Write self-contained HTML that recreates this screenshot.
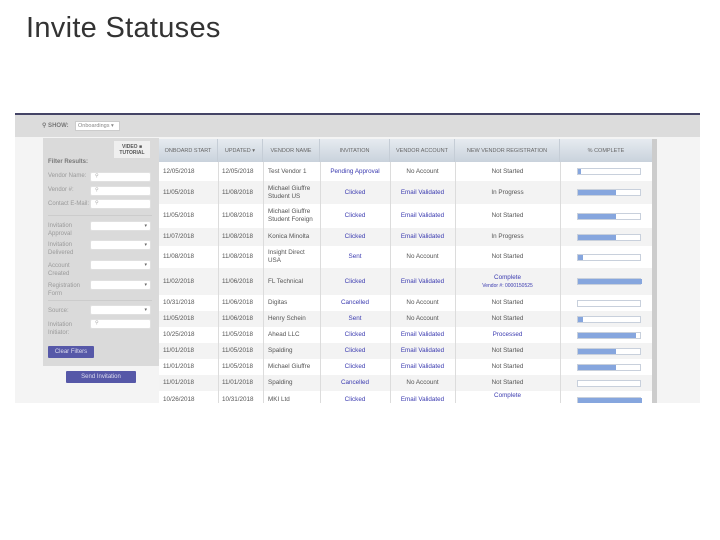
<!DOCTYPE html>
<html><head><meta charset="utf-8"><style>
*{margin:0;padding:0;box-sizing:border-box}
body{width:720px;height:540px;background:#fff;font-family:"Liberation Sans",sans-serif;position:relative;overflow:hidden}
.title{position:absolute;left:26px;top:12px;font-size:29px;color:#333;font-weight:normal;letter-spacing:0.3px}
.abs{position:absolute}
.lbl{position:absolute;font-size:6px;color:#9a9a9a;line-height:8px}
.inp{position:absolute;left:90px;width:61px;height:10px;background:#fff;border:1px solid #e0e0e0;border-radius:2px;font-size:5px;color:#aaa;padding-left:4px}
.sel::after{content:"▾";position:absolute;right:3px;top:1px;font-size:5px;color:#666}
.cell{position:absolute;font-size:6.3px;color:#555;display:flex;align-items:center;line-height:8px}
.c{justify-content:center;text-align:center}
.b{color:#3b3bb0}
.bar{position:absolute;left:577px;width:64px;height:7px;border:1px solid #c8d0dc;background:#fff}
.bar i{display:block;height:100%;background:#86a6de}
.hd{position:absolute;top:139px;height:23px;font-size:5.5px;color:#666;display:flex;align-items:center;justify-content:center;border-right:1px solid #c5cdd6}
</style></head><body>
<div class="title">Invite Statuses</div>
<div class="abs" style="left:15px;top:113px;width:685px;height:290px;background:#f4f4f4"></div>
<div class="abs" style="left:15px;top:113px;width:685px;height:2px;background:#444466"></div>
<div class="abs" style="left:15px;top:115px;width:685px;height:22px;background:#dcdcdc"></div>
<div class="abs" style="left:42px;top:122px;font-size:6px;color:#777;font-weight:bold">⚲ SHOW:</div>
<div class="abs" style="left:75px;top:121px;width:45px;height:10px;background:#fff;border:1px solid #ccc;font-size:5.5px;color:#888;padding:1px 2px">Onboardings ▾</div>
<div class="abs" style="left:43px;top:138px;width:116px;height:228px;background:#dadada"></div>
<div class="abs" style="left:114px;top:141px;width:36px;height:17px;background:#efefef;font-size:5px;color:#555;font-weight:bold;text-align:center;line-height:6px;padding-top:3px">VIDEO ■<br>TUTORIAL</div>
<div class="lbl" style="left:48px;top:158px;color:#777;font-weight:bold">Filter Results:</div>
<div class="lbl" style="left:48px;top:172px">Vendor Name:</div><div class="inp" style="top:172px">⚲</div>
<div class="lbl" style="left:48px;top:186px">Vendor #:</div><div class="inp" style="top:186px">⚲</div>
<div class="lbl" style="left:48px;top:200px">Contact E-Mail:</div><div class="inp" style="top:199px">⚲</div>
<div class="abs" style="left:48px;top:215px;width:104px;height:1px;background:#ccc"></div>
<div class="lbl" style="left:48px;top:222px">Invitation<br>Approval</div><div class="inp sel" style="top:221px"></div>
<div class="lbl" style="left:48px;top:241px">Invitation<br>Delivered</div><div class="inp sel" style="top:240px"></div>
<div class="lbl" style="left:48px;top:262px">Account<br>Created</div><div class="inp sel" style="top:260px"></div>
<div class="lbl" style="left:48px;top:282px">Registration<br>Form</div><div class="inp sel" style="top:280px"></div>
<div class="abs" style="left:48px;top:300px;width:104px;height:1px;background:#ccc"></div>
<div class="lbl" style="left:48px;top:307px">Source:</div><div class="inp sel" style="top:305px"></div>
<div class="lbl" style="left:48px;top:321px">Invitation<br>Initiator:</div><div class="inp" style="top:319px">⚲</div>
<div class="abs" style="left:48px;top:346px;width:46px;height:12px;background:#5658a8;color:#dde;font-size:6px;text-align:center;line-height:12px;border-radius:1px">Clear Filters</div>
<div class="abs" style="left:66px;top:371px;width:70px;height:12px;background:#5658a8;color:#dde;font-size:6px;text-align:center;line-height:12px;border-radius:1px">Send Invitation</div>
<div class="abs" style="left:159px;top:139px;width:493px;height:23px;background:linear-gradient(#e6ebf0,#c9d2dc)"></div>
<div class="hd" style="left:159px;width:59px">ONBOARD START</div>
<div class="hd" style="left:218px;width:45px">UPDATED ▾</div>
<div class="hd" style="left:263px;width:57px">VENDOR NAME</div>
<div class="hd" style="left:320px;width:70px">INVITATION</div>
<div class="hd" style="left:390px;width:65px">VENDOR ACCOUNT</div>
<div class="hd" style="left:455px;width:105px">NEW VENDOR REGISTRATION</div>
<div class="hd" style="left:560px;width:92px;border:none">% COMPLETE</div>
<div class="abs" style="left:652px;top:139px;width:5px;height:264px;background:#ccc"></div>
<div class="abs" style="left:159px;top:162px;width:493px;height:241px;background:#fff"></div>
<div id="rows"></div>
<script>
var R=[[162,181,"12/05/2018","12/05/2018","Test Vendor 1","Pending Approval","No Account","Not Started",3],
[181,204,"11/05/2018","11/08/2018","Michael Giuffre<br>Student US","Clicked","Email Validated","In Progress",38],
[204,228,"11/05/2018","11/08/2018","Michael Giuffre<br>Student Foreign","Clicked","Email Validated","Not Started",38],
[228,246,"11/07/2018","11/08/2018","Konica Minolta","Clicked","Email Validated","In Progress",38],
[246,268,"11/08/2018","11/08/2018","Insight Direct<br>USA","Sent","No Account","Not Started",5],
[268,295,"11/02/2018","11/06/2018","FL Technical","Clicked","Email Validated","C",64],
[295,311,"10/31/2018","11/06/2018","Digitas","Cancelled","No Account","Not Started",0],
[311,327,"11/05/2018","11/06/2018","Henry Schein","Sent","No Account","Not Started",5],
[327,343,"10/25/2018","11/05/2018","Ahead LLC","Clicked","Email Validated","P",58],
[343,359,"11/01/2018","11/05/2018","Spalding","Clicked","Email Validated","Not Started",38],
[359,375,"11/01/2018","11/05/2018","Michael Giuffre","Clicked","Email Validated","Not Started",38],
[375,391,"11/01/2018","11/01/2018","Spalding","Cancelled","No Account","Not Started",0],
[391,409,"10/26/2018","10/31/2018","MKI Ltd","Clicked","Email Validated","Complete",64]];
var h="";
R.forEach(function(r,i){var t=r[0],H=Math.min(r[1],403)-t;
if(i%2)h+='<div class="abs" style="left:159px;top:'+t+'px;width:493px;height:'+H+'px;background:#f3f3f3"></div>';
var st='top:'+t+'px;height:'+(r[1]-t)+'px;';
h+='<div class="cell" style="left:163px;'+st+'">'+r[2]+'</div>';
h+='<div class="cell" style="left:222px;'+st+'">'+r[3]+'</div>';
h+='<div class="cell" style="left:268px;'+st+'">'+r[4]+'</div>';
h+='<div class="cell c b" style="left:320px;width:70px;'+st+'">'+r[5]+'</div>';
h+='<div class="cell c'+(r[6][0]=="E"?" b":"")+'" style="left:390px;width:65px;'+st+'">'+r[6]+'</div>';
var n=r[7];if(n=="C")n='<div><span class="b">Complete</span><br><span class="b" style="font-size:5px">Vendor #: 0000150525</span></div>';else if(n=="P")n='<span class="b">Processed</span>';else if(n=="Complete")n='<span class="b" style="margin-top:-8px">Complete</span>';
h+='<div class="cell c" style="left:455px;width:105px;'+st+'">'+n+'</div>';
h+='<div class="bar" style="top:'+(t+(r[1]-t)/2-3.5)+'px"><i style="width:'+r[8]+'px"></i></div>';
});
[218,263,320,390,455,560].forEach(function(x){h+='<div class="abs" style="left:'+x+'px;top:162px;width:1px;height:241px;background:#dcdcdc"></div>'});
h+='<div class="abs" style="left:15px;top:403px;width:700px;height:20px;background:#fff"></div>';
document.getElementById("rows").innerHTML=h;
</script>
</body></html>
